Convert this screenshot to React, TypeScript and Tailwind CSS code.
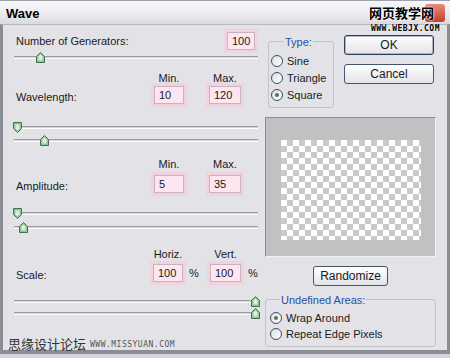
import type { ReactNode } from 'react';

const font = { fontFamily: '"Liberation Sans", Arial, sans-serif' };

const Field = ({ value, w = 30 }: { value: string; w?: number }) => (
  <div
    className="flex h-[18px] items-center border border-[#c9b3bf] bg-[#fde6ef] pl-[4px] text-[11px] text-[#1a1a1a] shadow-[0_0_0_3px_#f1d3df]"
    style={{ width: w }}
  >
    {value}
  </div>
);

const Thumb = ({ up }: { up?: boolean }) => (
  <svg width="9" height="11" viewBox="0 0 9 11" className={up ? '' : 'rotate-180'}>
    <path d="M4.5 0.5 L8.5 4.5 L8.5 10.5 L0.5 10.5 L0.5 4.5 Z" fill="#8fc79a" stroke="#4b6b52" strokeWidth="1" />
    <path d="M4.5 2.5 L6.5 4.5 L6.5 8.5 L2.5 8.5 L2.5 4.5 Z" fill="#d8f0dc" />
  </svg>
);

const Slider = ({ at, up, className = '' }: { at: number; up?: boolean; className?: string }) => (
  <div className={`relative h-[12px] w-[244px] ${className}`}>
    <div className="absolute left-0 right-0 top-[5px] h-[3px] border-t border-b border-t-[#9d9da3] border-b-white bg-[#d4d4d8]" />
    <div className="absolute top-[1px]" style={{ left: at - 4 }}>
      <Thumb up={up} />
    </div>
  </div>
);

const Radio = ({ checked, children }: { checked?: boolean; children: ReactNode }) => (
  <div className="flex h-[16px] items-center gap-[4px] text-[11px] text-[#1a1a1a]">
    <div className="flex h-[12px] w-[12px] items-center justify-center rounded-full border border-[#3b4d66] bg-gradient-to-br from-[#d9dde6] to-white">
      {checked && <div className="h-[4px] w-[4px] rounded-full bg-[#4a7a52]" />}
    </div>
    <span>{children}</span>
  </div>
);

const Button = ({ children, w, focus }: { children: ReactNode; w: number; focus?: boolean }) => (
  <div
    className={`flex h-[20px] items-center justify-center rounded-[3px] border bg-gradient-to-b from-white to-[#e3e3ea] text-[12px] text-[#1a1a1a] ${focus ? 'border-[#2e3f5a] shadow-[inset_0_0_0_1px_#a9b6cc]' : 'border-[#46546c]'}`}
    style={{ width: w }}
  >
    {children}
  </div>
);

const MinMax = ({ a, b }: { a: string; b: string }) => (
  <div className="flex h-[14px] text-[11px] text-[#1a1a1a]">
    <div className="w-[140px]" />
    <div className="w-[30px] text-center">{a}</div>
    <div className="w-[25px]" />
    <div className="w-[32px] text-center">{b}</div>
  </div>
);

export default function App() {
  return (
    <div className="relative h-[358px] w-[450px] overflow-hidden bg-[#d4d4da]" style={font}>
      <div className="flex h-[24px] items-center border-t border-[#9ea3ad] bg-gradient-to-b from-[#f7f7f9] via-[#eeeef2] to-[#d9d9df] pl-[6px] pt-[3px] text-[13px] font-bold text-black">
        Wave
      </div>
      <div className="flex h-[330px] border-l-[3px] border-r-[3px] border-b-[4px] border-t border-l-[#8a8d96] border-r-[#8a8d96] border-b-[#8a8d96] border-t-[#b8b8c0] bg-[#e3e3e7]">
        <div className="flex w-[262px] flex-col pl-[11px] pt-[7px]">
          <div className="flex h-[18px] items-center text-[11px] text-[#1a1a1a]">
            <div className="w-[213px] pl-[2px]">Number of Generators:</div>
            <Field value="100" w={28} />
          </div>
          <Slider at={26} up className="mt-[1px]" />

          <div className="mt-[7px]">
            <MinMax a="Min." b="Max." />
          </div>
          <div className="mt-[2px] flex h-[18px] items-center text-[11px] text-[#1a1a1a]">
            <div className="w-[140px] pl-[2px] pt-[5px]">Wavelength:</div>
            <Field value="10" />
            <div className="w-[25px]" />
            <Field value="120" w={32} />
          </div>
          <Slider at={3} className="mt-[17px]" />
          <Slider at={30} up className="mt-[1px]" />

          <div className="mt-[10px]">
            <MinMax a="Min." b="Max." />
          </div>
          <div className="mt-[5px] flex h-[18px] items-center text-[11px] text-[#1a1a1a]">
            <div className="w-[140px] pl-[2px] pt-[5px]">Amplitude:</div>
            <Field value="5" />
            <div className="w-[25px]" />
            <Field value="35" w={32} />
          </div>
          <Slider at={3} className="mt-[14px]" />
          <Slider at={9} up className="mt-[2px]" />

          <div className="mt-[13px] flex h-[14px] text-[11px] text-[#1a1a1a]">
            <div className="w-[139px]" />
            <div className="w-[30px] text-center">Horiz.</div>
            <div className="w-[27px]" />
            <div className="w-[31px] text-center">Vert.</div>
          </div>
          <div className="mt-[4px] flex h-[18px] items-center text-[11px] text-[#1a1a1a]">
            <div className="w-[139px] pl-[2px] pt-[4px]">Scale:</div>
            <Field value="100" />
            <div className="w-[27px] pl-[6px]">%</div>
            <Field value="100" w={31} />
            <div className="pl-[7px]">%</div>
          </div>
          <Slider at={241} up className="mt-[13px]" />
          <Slider at={241} up />
        </div>

        <div className="flex w-[171px] flex-col pt-[7px]">
          <div className="flex">
            <div className="relative ml-[3px] mt-[9px] h-[67px] w-[66px] rounded-[3px] border border-[#c3c3c8] pl-[2px] pt-[11px]">
              <span className="absolute -top-[6px] left-[15px] bg-[#e3e3e7] px-[1px] text-[11px] leading-[12px] text-[#2451a8]">
                Type:
              </span>
              <Radio>Sine</Radio>
              <div className="mt-[1px]">
                <Radio>Triangle</Radio>
              </div>
              <div className="mt-[1px]">
                <Radio checked>Square</Radio>
              </div>
            </div>
            <div className="ml-[10px] mt-[3px] flex flex-col gap-[9px]">
              <Button w={90} focus>
                OK
              </Button>
              <Button w={90}>Cancel</Button>
            </div>
          </div>

          <div className="mt-[9px] flex h-[140px] w-[171px] border border-[#8b8b90] border-b-[#f2f2f4] border-r-[#f2f2f4] bg-[#c1c1c4] pl-[15px] pt-[22px]">
            <div className="h-[100px] w-[140px] bg-[conic-gradient(#c9c9cc_25%,#ffffff_0_50%,#c9c9cc_0_75%,#ffffff_0)] bg-[length:12px_12px]" />
          </div>

          <div className="mt-[9px] flex justify-center">
            <Button w={75}>Randomize</Button>
          </div>

          <div className="relative mt-[13px] h-[48px] w-[171px] rounded-[3px] border border-[#c3c3c8] pl-[4px] pt-[10px]">
            <span className="absolute -top-[6px] left-[14px] bg-[#e3e3e7] px-[1px] text-[11px] leading-[12px] text-[#2451a8]">
              Undefined Areas:
            </span>
            <Radio checked>Wrap Around</Radio>
            <Radio>Repeat Edge Pixels</Radio>
          </div>
        </div>
      </div>

      {/* watermarks */}
      <div className="absolute right-[5px] top-[4px] h-[18px] w-[20px] rounded-[3px] bg-gradient-to-b from-[#e88a7a] to-[#c2412c]" />
      <div className="absolute right-[16px] top-[4px] text-[13px] font-bold leading-[18px] text-black [font-family:'Noto_Sans_CJK_SC',sans-serif] [text-shadow:0_0_2px_#fff,0_0_2px_#fff]">
        网页教学网
      </div>
      <div className="absolute right-[10px] top-[24px] text-[8px] font-bold leading-[10px] tracking-[0.5px] text-black [font-family:'DejaVu_Sans_Mono',monospace] [text-shadow:0_0_2px_#fff]">
        WWW.WEBJX.COM
      </div>
      <div className="absolute bottom-[7px] left-[8px] flex items-end gap-[4px]">
        <span className="text-[13px] leading-[15px] text-[#333] [font-family:'Noto_Sans_CJK_SC',sans-serif]">思缘设计论坛</span>
        <span className="pb-[2px] text-[8px] leading-[9px] tracking-[0.5px] text-[#555] [font-family:'DejaVu_Sans_Mono',monospace]">
          WWW.MISSYUAN.COM
        </span>
      </div>
    </div>
  );
}
